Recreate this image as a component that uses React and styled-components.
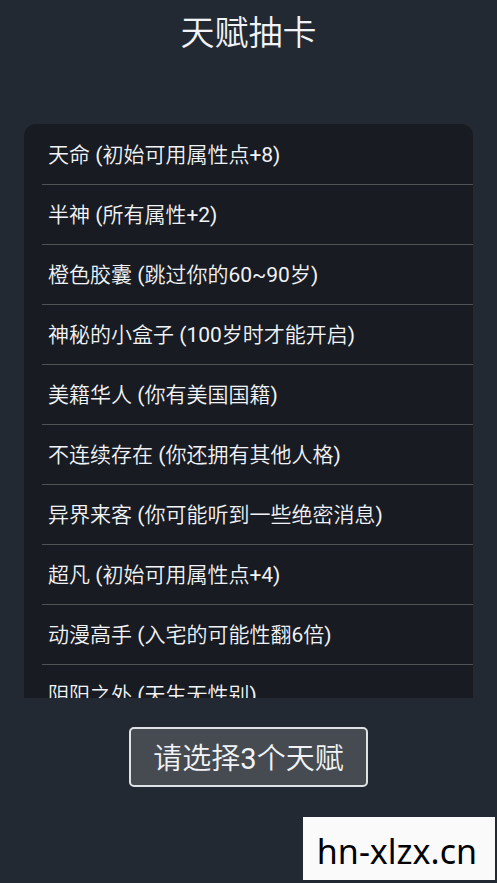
import React, { useState } from 'react'
import styled, { createGlobalStyle } from 'styled-components'

const color = {
  page: '#222932',
  panel: '#181b22',
  line: '#505256',
  text: '#f1f3f6',
  button: '#464b51',
}

const GlobalStyle = createGlobalStyle`
  * {
    box-sizing: border-box;
  }

  body {
    margin: 0;
    background: ${color.page};
    color: ${color.text};
    font-family: Roboto, 'Noto Sans CJK SC DemiLight', 'Noto Sans CJK SC', sans-serif;
    font-weight: 400;
  }
`

const Page = styled.main`
  display: flex;
  flex-direction: column;
  height: 100vh;
  padding: 0 24px;
`

const Title = styled.h1`
  margin: 9px 0 67px;
  font-size: 34px;
  font-weight: 400;
  line-height: 48px;
  text-align: center;
`

const TalentList = styled.ul`
  flex: 1;
  min-height: 0;
  margin: 0;
  padding: 1px 0 0 18px;
  background: ${color.panel};
  border-radius: 12px 12px 0 0;
  list-style: none;
  overflow-y: auto;
  scrollbar-width: none;
`

const TalentItem = styled.li`
  border-bottom: 1px solid ${color.line};
`

const TalentButton = styled.button`
  display: block;
  width: 100%;
  height: 59px;
  padding: 0 6px;
  border: 0;
  background: ${props => (props.$selected ? color.button : 'transparent')};
  color: inherit;
  font: inherit;
  font-size: 21px;
  line-height: 28px;
  text-align: left;
  cursor: pointer;
`

const Footer = styled.footer`
  display: flex;
  justify-content: center;
  padding: 29px 0 96px;
`

const ConfirmButton = styled.button`
  height: 60px;
  padding: 4px 22px 0;
  background: ${color.button};
  border: 2px solid #dfe2e5;
  border-radius: 5px;
  color: inherit;
  font: inherit;
  font-size: 29px;
  line-height: 40px;
  cursor: pointer;
`

const SiteLink = styled.a`
  position: fixed;
  right: 2px;
  bottom: 3px;
  padding: 10px 18px 5px 14px;
  background: #fafafa;
  color: #000;
  font-family: 'Noto Sans', sans-serif;
  font-size: 34px;
  font-weight: 400;
  line-height: 48px;
  text-decoration: none;
`

const talents = [
  { name: '天命', effect: '初始可用属性点+8' },
  { name: '半神', effect: '所有属性+2' },
  { name: '橙色胶囊', effect: '跳过你的60~90岁' },
  { name: '神秘的小盒子', effect: '100岁时才能开启' },
  { name: '美籍华人', effect: '你有美国国籍' },
  { name: '不连续存在', effect: '你还拥有其他人格' },
  { name: '异界来客', effect: '你可能听到一些绝密消息' },
  { name: '超凡', effect: '初始可用属性点+4' },
  { name: '动漫高手', effect: '入宅的可能性翻6倍' },
  { name: '阴阳之外', effect: '天生无性别' },
]

const MAX_SELECTED = 3

export default function App() {
  const [selected, setSelected] = useState([])

  const toggle = name => {
    if (selected.includes(name)) {
      setSelected(selected.filter(item => item !== name))
    } else if (selected.length < MAX_SELECTED) {
      setSelected([...selected, name])
    }
  }

  return (
    <>
      <GlobalStyle />
      <Page lang="zh-CN">
        <Title>天赋抽卡</Title>
        <TalentList>
          {talents.map(({ name, effect }) => (
            <TalentItem key={name}>
              <TalentButton
                type="button"
                aria-pressed={selected.includes(name)}
                $selected={selected.includes(name)}
                onClick={() => toggle(name)}
              >
                {`${name} (${effect})`}
              </TalentButton>
            </TalentItem>
          ))}
        </TalentList>
        <Footer>
          <ConfirmButton type="button">请选择3个天赋</ConfirmButton>
        </Footer>
      </Page>
      <SiteLink href="https://hn-xlzx.cn">hn-xlzx.cn</SiteLink>
    </>
  )
}
